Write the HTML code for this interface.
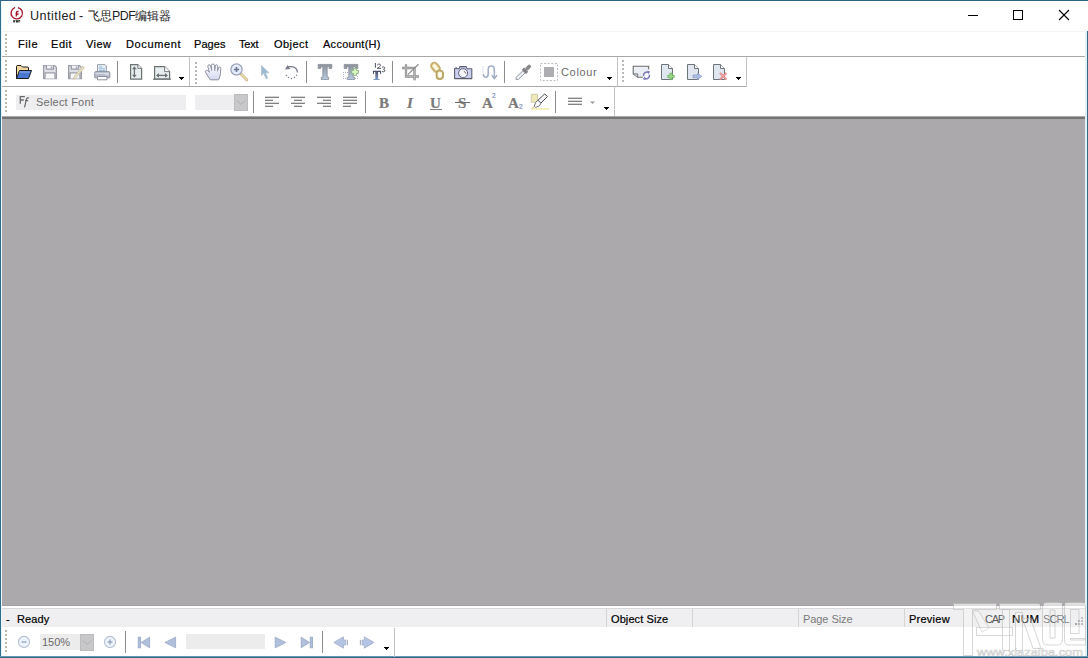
<!DOCTYPE html>
<html><head><meta charset="utf-8">
<style>
*{margin:0;padding:0;box-sizing:border-box}
html,body{width:1088px;height:658px;overflow:hidden;background:#fff;font-family:"Liberation Sans",sans-serif;font-size:11px;color:#000}
.a{position:absolute}
svg{position:absolute;overflow:visible}
.t{position:absolute;white-space:nowrap;line-height:14px;-webkit-text-stroke:0.2px currentColor}
#win{position:absolute;left:0;top:0;width:1088px;height:658px;background:#fff}
.grip{position:absolute;width:2px;background-image:linear-gradient(#b8b8b8 50%,transparent 50%);background-size:2px 4px}
.vs{position:absolute;width:1px;background:#8c8c8c}
.gb{position:absolute;width:1px;background:#c4c4c4}
.hline{position:absolute;height:1px;background:#c0c0c0}
.dd{position:absolute;width:0;height:0;border-left:3px solid transparent;border-right:3px solid transparent;border-top:3px solid #000}
</style></head><body>
<div id="win">
  <!-- borders -->
  <div class="a" style="left:0;top:0;width:1088px;height:1px;background:#2c6282"></div>
  <div class="a" style="left:0;top:0;width:1px;height:658px;background:#326c8c"></div>
  <div class="a" style="left:1px;top:1px;width:1px;height:655px;background:#e6f8fc"></div>
  <div class="a" style="left:1085px;top:31px;width:2px;height:627px;background:#e4f2f8"></div>
  <div class="a" style="left:1087px;top:31px;width:1px;height:627px;background:#326c8c"></div>
  <div class="a" style="left:0;top:656px;width:1088px;height:1px;background:#6a98b4"></div>
  <div class="a" style="left:0;top:657px;width:1088px;height:1px;background:#2c6484"></div>

  <!-- title bar -->
  <svg style="left:4px;top:2px" width="24" height="24" viewBox="0 0 24 24">
    <path d="M10.6 5.9 A5.7 5.7 0 1 0 13.9 5.6" fill="none" stroke="#a8182a" stroke-width="1.35"/>
    <path d="M10.9 5.8 L10.2 5" stroke="#a8182a" stroke-width="1.1"/>
    <path d="M12.4 14.6 V10.6 Q12.5 9.3 14.6 9.5 M12.4 11.9 H14.6" fill="none" stroke="#a8182a" stroke-width="1.5"/>
    <g fill="#2a2a2a"><rect x="9.2" y="18.2" width="1.6" height="2.3"/><rect x="10.6" y="18.2" width="0.9" height="1.2"/><rect x="12" y="18.2" width="1.9" height="2.3"/><rect x="14.4" y="18.2" width="1.8" height="1"/><rect x="14.4" y="18.2" width="1" height="2.3"/></g>
  </svg>
  <div class="t" style="left:30px;top:9px;font-size:12.6px;color:#222;-webkit-text-stroke:0;letter-spacing:0.45px">Untitled</div>
  <div class="t" style="left:79px;top:9px;font-size:12.6px;color:#222;-webkit-text-stroke:0">-</div>
  <div class="t" style="left:88px;top:9px;font-size:11.8px;color:#222;-webkit-text-stroke:0">飞思</div>
  <div class="t" style="left:112px;top:9px;font-size:12.4px;color:#222;-webkit-text-stroke:0;letter-spacing:-0.5px">PDF</div>
  <div class="t" style="left:135px;top:9px;font-size:11.6px;color:#222;-webkit-text-stroke:0">编辑器</div>
  <div class="a" style="left:968px;top:15px;width:10px;height:1px;background:#000"></div>
  <div class="a" style="left:1013px;top:10px;width:10px;height:10px;border:1px solid #000"></div>
  <svg style="left:1059px;top:10px" width="10" height="10" viewBox="0 0 10 10"><path d="M0 0 L10 10 M10 0 L0 10" stroke="#000" stroke-width="1.1"/></svg>

  <!-- menu bar -->
  <div class="hline" style="left:1px;top:31px;width:1085px;background:#f4f4f4"></div>
  <div class="hline" style="left:2px;top:56px;width:1083px;background:#a8a8a8"></div>
  <div class="grip" style="left:5px;top:34px;height:21px"></div>
  <div class="t" style="left:18px;top:37px;letter-spacing:0.6px">File</div>
  <div class="t" style="left:51px;top:37px;letter-spacing:0.57px">Edit</div>
  <div class="t" style="left:86px;top:37px;letter-spacing:0.47px">View</div>
  <div class="t" style="left:126px;top:37px;letter-spacing:0.64px">Document</div>
  <div class="t" style="left:194px;top:37px;letter-spacing:0.08px">Pages</div>
  <div class="t" style="left:239px;top:37px;letter-spacing:-0.17px">Text</div>
  <div class="t" style="left:274px;top:37px;letter-spacing:0.44px">Object</div>
  <div class="t" style="left:323px;top:37px;letter-spacing:0.27px">Account(H)</div>

  <!-- TOOLBAR 1 -->
  <div class="hline" style="left:2px;top:86px;width:745px;background:#a8a8a8"></div>
  <div class="grip" style="left:5px;top:60px;height:24px"></div>
    <!-- group 1: file -->
  <!-- open folder -->
  <svg style="left:16px;top:64px" width="16" height="16" viewBox="0 0 16 16">
    <path d="M0.5 14.5 V2.5 Q0.5 1.5 1.5 1.5 H5 L6.5 3 H11.5 Q12.5 3 12.5 4 V6.5" fill="#f0d8a0" stroke="#1a1a1a" stroke-width="1"/>
    <path d="M0.5 14.5 L3.5 6.5 H15.5 L12.5 14.5 Z" fill="#4a78d0" stroke="#1a1a1a" stroke-width="1" stroke-linejoin="round"/>
    <path d="M3.2 8 H14" stroke="#8fb0ec" stroke-width="1"/>
  </svg>
  <!-- save (disabled) -->
  <svg style="left:40px;top:60px" width="72" height="24" viewBox="0 0 72 24">
    <g stroke="#9a9ca6" stroke-width="1.3" stroke-linejoin="round">
      <path d="M3.6 5.6 H14.6 L16.4 7.4 V18.6 H3.6 Z" fill="#dfe0e8"/>
      <path d="M6.4 5.6 V9.2 H13.4 V5.6" fill="#f4f4f8"/>
      <path d="M5 18.6 V12.8 H15 V18.6" fill="#f8f8fa"/>
    </g>
    <path d="M11.4 6.4 V8.4" stroke="#9a9ca6" stroke-width="1.2"/>
    <g stroke="#9a9ca6" stroke-width="1.3" stroke-linejoin="round">
      <path d="M28.6 5.6 H39.6 L41.4 7.4 V18.6 H28.6 Z" fill="#dfe0e8"/>
      <path d="M31.4 5.6 V9.2 H38.4 V5.6" fill="#f4f4f8"/>
      <path d="M30 18.6 V12.8 H40 V18.6" fill="#f8f8fa"/>
    </g>
    <path d="M36.4 6.4 V8.4" stroke="#9a9ca6" stroke-width="1.2"/>
    <path d="M33.5 17.5 L42 7 Q42.8 6 43.6 6.8 Q44.4 7.6 43.6 8.6 L35.2 18.6 L33 19.2 Z" fill="#ece4c4" stroke="#c4bca4" stroke-width="0.8"/>
    <!-- printer -->
    <path d="M57.5 4.6 H65 L66.4 6 V12 H57.5 Z" fill="#e4eef6" stroke="#9a9ea8" stroke-width="1"/>
    <path d="M59 7 H62 M59 8.8 H65 M59 10.6 H65" stroke="#8cb0cc" stroke-width="0.9"/>
    <path d="M54.8 12.6 Q54.8 11.6 55.8 11.6 H68.8 Q69.8 11.6 69.8 12.6 V17.8 H54.8 Z" fill="#b8bccc" stroke="#8e92a0" stroke-width="1"/>
    <path d="M55.5 13.4 H69" stroke="#d8dce8" stroke-width="1.2"/>
    <circle cx="66" cy="14.6" r="0.6" fill="#fff"/><circle cx="68" cy="14.6" r="0.6" fill="#fff"/>
    <path d="M57.5 16.5 H67 V19.8 H57.5 Z" fill="#fff" stroke="#8e92a0" stroke-width="1"/>
  </svg>
  <div class="vs" style="left:117px;top:61px;height:22px"></div>
  <!-- fit height -->
  <svg style="left:126px;top:60px" width="48" height="24" viewBox="0 0 48 24">
    <g stroke="#6c7272" stroke-width="1.2" stroke-linejoin="miter">
      <path d="M4.6 4.6 H11.8 L15.6 8.4 V19.2 H4.6 Z" fill="#e6eef0"/>
      <path d="M11.8 4.6 V8.4 H15.6" fill="#f4f6f8" stroke-width="0.9"/>
      <path d="M28.6 6.6 H38.6 L43.6 11.6 V19 H28.6 Z" fill="#e6eef0"/>
      <path d="M38.6 6.6 V11.6 H43.6" fill="#f4f6f8" stroke-width="0.9"/>
      <path d="M27 19.2 H45" />
    </g>
    <path d="M8.4 7.5 V16.5" stroke="#6c7272" stroke-width="1.3"/>
    <path d="M6.1 9.3 L8.4 6.2 L10.7 9.3 Z M6.1 14.7 L8.4 17.8 L10.7 14.7 Z" fill="#6c7272"/>
    <path d="M31.5 15.4 H40.5" stroke="#6c7272" stroke-width="1.3"/>
    <path d="M33 13.1 L30 15.4 L33 17.7 Z M39 13.1 L42 15.4 L39 17.7 Z" fill="#6c7272"/>
  </svg>
  <svg style="left:179px;top:77px" width="5" height="3" viewBox="0 0 5 3" shape-rendering="crispEdges"><path d="M0 0H5V1H4V2H3V3H2V2H1V1H0Z" fill="#000"/></svg>
  <div class="gb" style="left:189px;top:57px;height:29px"></div>

  <!-- group 2: tools -->
  <div class="grip" style="left:195px;top:62px;height:22px"></div>
  <!-- hand -->
  <svg style="left:200px;top:60px" width="24" height="24" viewBox="0 0 24 24">
    <defs><linearGradient id="hg" x1="0" y1="0" x2="0" y2="1"><stop offset="0" stop-color="#ffffff"/><stop offset="1" stop-color="#d4d8f0"/></linearGradient></defs>
    <path d="M10.2 19.8 L5.6 12.6 Q4.9 11 6.3 10.3 Q7.3 9.9 8.3 11.2 L9.3 12.3 L7.9 6.6 Q7.6 5 8.9 4.8 Q10.2 4.6 10.6 6 L11.6 9.6 L11.4 5.3 Q11.4 4 12.9 4 Q14.4 4 14.5 5.3 L14.8 9.6 L15.3 5.8 Q15.5 4.7 16.6 4.8 Q17.9 5 17.8 6.2 L17.6 10.4 L18.5 7.9 Q18.9 6.9 19.9 7.1 Q20.9 7.4 20.8 8.6 L20.5 13.2 Q20.2 16.5 18.6 19.8 Z" fill="url(#hg)" stroke="#8c8e9c" stroke-width="1" stroke-linejoin="round"/>
    <path d="M11.6 9.6 L11.8 11 M14.8 9.6 V11 M17.6 10.4 L17.4 11.5" stroke="#8c8e9c" stroke-width="0.8"/>
  </svg>
  <!-- zoom in -->
  <svg style="left:230px;top:63px" width="18" height="18" viewBox="0 0 18 18">
    <path d="M10.5 10.5 L16.8 16.8" stroke="#c8b888" stroke-width="3" stroke-linecap="round"/>
    <path d="M10.5 10.5 L16.8 16.8" stroke="#f0e0b0" stroke-width="1.3" stroke-linecap="round"/>
    <circle cx="6.5" cy="6.5" r="5.6" fill="#e4ecfa" stroke="#9ca2b8" stroke-width="1.3"/>
    <path d="M6.5 3.9 V9.1 M3.9 6.5 H9.1" stroke="#6a7690" stroke-width="1.6"/>
  </svg>
  <!-- pointer -->
  <svg style="left:261px;top:65px" width="9" height="15" viewBox="0 0 9 15">
    <path d="M0.5 0.5 V10.5 L2.8 8.3 L5 13.8 L6.6 13 L4.5 7.8 H8 Z" fill="#a0bcd2" stroke="#a8c0d4" stroke-width="0.7" stroke-linejoin="round"/>
  </svg>
  <!-- rotate -->
  <svg style="left:280px;top:60px" width="24" height="24" viewBox="0 0 24 24">
    <path d="M8.2 6.6 H11.4 A5.8 5.8 0 0 1 17.4 12.6" fill="none" stroke="#7c7e8c" stroke-width="1.3"/>
    <path d="M5 9.6 L7.5 5 L10.4 8.9 Z" fill="#7c7e8c"/>
    <g fill="#7c7e8c"><circle cx="6.5" cy="15.4" r="0.75"/><circle cx="8.5" cy="17.4" r="0.75"/><circle cx="11.5" cy="18.4" r="0.75"/><circle cx="14.5" cy="17.4" r="0.75"/><circle cx="16.6" cy="15.3" r="0.75"/></g>
  </svg>
  <div class="vs" style="left:306px;top:61px;height:22px"></div>
  <!-- T -->
  <svg style="left:314px;top:60px" width="48" height="24" viewBox="0 0 48 24">
    <defs><linearGradient id="tg" x1="0" y1="0" x2="0" y2="1"><stop offset="0" stop-color="#8c9098"/><stop offset="1" stop-color="#b4cce2"/></linearGradient></defs>
    <path d="M4.2 4.4 H17.8 V8.5 H15.2 V6.8 H13.2 V17.3 H14.7 V19.5 H7.2 V17.3 H8.8 V6.8 H6.8 V8.5 H4.2 Z" fill="url(#tg)" stroke="#80848e" stroke-width="0.7"/>
    <path d="M30.2 4.4 H43.8 V8.5 H41.2 V6.8 H39.2 V17.3 H40.7 V19.5 H33.2 V17.3 H34.8 V6.8 H32.8 V8.5 H30.2 Z" fill="url(#tg)" stroke="#80848e" stroke-width="0.7"/>
    <g fill="#b0b4c8"><rect x="29" y="12" width="1" height="1"/><rect x="31" y="12" width="1" height="1"/><rect x="33" y="12" width="1" height="1"/><rect x="29" y="14" width="1" height="1"/><rect x="29" y="16" width="1" height="1"/><rect x="29" y="18" width="1" height="1"/><rect x="31" y="18" width="1" height="1"/><rect x="43" y="16" width="1" height="1"/><rect x="43" y="18" width="1" height="1"/><rect x="41" y="18" width="1" height="1"/></g>
    <path d="M39.5 8.6 H42.5 V10.4 H44.4 V13.4 H42.5 V15.4 H39.5 V13.4 H37.6 V10.4 H39.5 Z" fill="#d8f4c4" stroke="#8cb07c" stroke-width="0.9" stroke-linejoin="round"/>
  </svg>
  <!-- T 123 -->
  <svg style="left:366px;top:60px" width="24" height="24" viewBox="0 0 24 24">
    <defs><linearGradient id="tg2" x1="0" y1="0" x2="0" y2="1"><stop offset="0" stop-color="#4a4e60"/><stop offset="1" stop-color="#7e9cc8"/></linearGradient></defs>
    <path d="M6.9 10.8 H15.1 V13.9 H14 V12 H12.1 V19 H13.6 V20 H7.5 V19 H9.3 V12 H8 V13.9 H6.9 Z" fill="url(#tg2)"/>
    <path d="M9.4 3 V7.8" stroke="#5c5e68" stroke-width="1.1"/>
    <path d="M11.2 5 Q12.6 3.5 14.1 4.3 Q15.1 5.5 13.6 6.8 L11.2 8.4 H15.1" fill="none" stroke="#5c5e68" stroke-width="1"/>
    <path d="M16 7.4 Q17.6 6.4 18.7 7.4 Q19.1 8.7 17.4 9.3 Q19.3 9.7 18.9 11.1 Q17.9 12.2 16 11.5" fill="none" stroke="#5c5e68" stroke-width="1"/>
  </svg>
  <div class="vs" style="left:392px;top:61px;height:22px"></div>
  <!-- crop -->
  <svg style="left:400px;top:60px" width="48" height="24" viewBox="0 0 48 24">
    <path d="M6 4.2 V16.5 H19" fill="none" stroke="#8e8e90" stroke-width="2.3"/>
    <path d="M2 8 H14.5 V20.3" fill="none" stroke="#8e8e90" stroke-width="2.4"/>
    <path d="M6 4.5 V16.5 H18.6 M2.3 8 H14.5 V20" fill="none" stroke="#c4c4c6" stroke-width="0.7"/>
    <path d="M7.8 14.6 L18.5 4.2" stroke="#8e8e90" stroke-width="1.2"/>
    <!-- link -->
    <g transform="rotate(-40 35.5 7.3)"><rect x="32.3" y="2.3" width="6.4" height="10" rx="3.2" fill="#f4ecc0" stroke="#c8b070" stroke-width="2"/><rect x="34.8" y="4.6" width="1.4" height="5.4" rx="0.7" fill="#fff"/></g>
    <rect x="36.6" y="10.6" width="6.4" height="8.4" rx="3" fill="#f8f4e0" stroke="#bca466" stroke-width="1.9"/>
    <rect x="38.9" y="12.6" width="1.8" height="4.6" rx="0.9" fill="#fff"/>
  </svg>
  <!-- camera -->
  <svg style="left:450px;top:60px" width="52" height="24" viewBox="0 0 52 24">
    <path d="M4.6 18.6 V8.8 L6.3 7.8 L7.2 8.8 H9 L10 6.6 H16 L17.2 8.8 H21.8 V18.6 Z" fill="#ccd0f0" stroke="#5c5e70" stroke-width="1.1" stroke-linejoin="round"/>
    <circle cx="13.1" cy="13.2" r="4.5" fill="#f6f6fc" stroke="#5c5e70" stroke-width="1"/>
    <path d="M13.8 11.2 Q15.4 11.8 15.8 13.6" fill="none" stroke="#5c5e70" stroke-width="0.9"/>
    <path d="M10.4 14.6 L11.4 15.6" stroke="#9a9cb0" stroke-width="0.7"/>
    <!-- wave -->
    <path d="M33 6.5 V12.5" stroke="#c0c8dc" stroke-width="1.1" stroke-dasharray="1.2 1.2"/>
    <path d="M33.2 14 Q33.8 17.2 35.8 17.2 Q38.2 17.2 38.2 13.5 V9.5 Q38.2 6 41.2 6 Q44.3 6 44.3 9.5 V17.8" fill="none" stroke="#a4b0c8" stroke-width="1.6"/>
    <path d="M41.8 15.2 L44.4 18.6 L47 15.2" fill="none" stroke="#98a4bc" stroke-width="1.3"/>
  </svg>
  <div class="vs" style="left:504px;top:61px;height:22px"></div>
  <!-- eyedropper -->
  <svg style="left:510px;top:60px" width="24" height="24" viewBox="0 0 24 24">
    <g transform="translate(13.4 12.35) rotate(-45)">
      <path d="M-10.2 0 L-8.8 -1.5 H0.9 V1.5 H-8.8 Z" fill="#eef0f8" stroke="#8c8e96" stroke-width="0.9"/>
      <rect x="0.8" y="-3" width="3" height="6" fill="#808084"/>
      <rect x="3.6" y="-1.8" width="6.4" height="3.6" rx="1.5" fill="#8a8a8e"/>
    </g>
  </svg>
  <svg style="left:540px;top:63px" width="18" height="18" viewBox="0 0 18 18"><rect x="0.5" y="0.5" width="17" height="17" fill="none" stroke="#bcbcc6" stroke-width="1" stroke-dasharray="2 1.6"/></svg>
  <div class="a" style="left:544px;top:67px;width:10px;height:10px;background:#aeaeb2"></div>
  <div class="t" style="-webkit-text-stroke:0;left:561px;top:65px;color:#6d6d6d;letter-spacing:0.66px">Colour</div>
  <svg style="left:607px;top:77px" width="5" height="3" viewBox="0 0 5 3" shape-rendering="crispEdges"><path d="M0 0H5V1H4V2H3V3H2V2H1V1H0Z" fill="#000"/></svg>
  <div class="gb" style="left:617px;top:57px;height:30px"></div>

  <!-- group 3: pages -->
  <div class="gb" style="left:746px;top:57px;height:30px"></div>
  <div class="grip" style="left:622px;top:60px;height:24px"></div>
  <!-- page rotate -->
  <svg style="left:630px;top:60px" width="24" height="24" viewBox="0 0 24 24">
    <path d="M3.2 6.3 H18.7 V11 L13 17.2 H7.7 L3.2 13.9 Z" fill="#eceef6"/>
    <path d="M12.8 17.2 H7.7 L3.2 13.9 V6.3 H18.7 V9.5" fill="none" stroke="#6c6c6c" stroke-width="1.1"/>
    <path d="M3.2 13.9 H7.7 V17.2" fill="#c8ccd8" stroke="#6c6c6c" stroke-width="0.9"/>
    <path d="M13.6 16 A3.3 3.3 0 0 1 18.6 12.6" fill="none" stroke="#7a78b8" stroke-width="1.5"/>
    <path d="M19.4 14.6 A3.3 3.3 0 0 1 14.4 18.2" fill="none" stroke="#7a78b8" stroke-width="1.5"/>
    <path d="M17.2 10.8 L20.2 11.6 L18.4 14.2 Z M15.8 20 L12.8 19.2 L14.6 16.6 Z" fill="#7a78b8"/>
  </svg>
  <!-- page add -->
  <svg style="left:661px;top:64px" width="15" height="16" viewBox="0 0 15 16">
    <path d="M0.5 0.5 H7.5 L11.5 4.5 V15.5 H0.5 Z" fill="#dfe6f0" stroke="#6c7478" stroke-width="1"/>
    <path d="M7.5 0.5 V4.5 H11.5" fill="#fff" stroke="#6c7478" stroke-width="1"/>
    <path d="M6.8 11.3 H8.9 V9.2 H11.1 V11.3 H13.2 V13.5 H11.1 V15.6 H8.9 V13.5 H6.8 Z" fill="#9ad88a" stroke="#70b060" stroke-width="0.8"/>
  </svg>
  <!-- page export -->
  <svg style="left:687px;top:64px" width="16" height="16" viewBox="0 0 16 16">
    <path d="M0.5 0.5 H7.5 L11.5 4.5 V15.5 H0.5 Z" fill="#dfe6f0" stroke="#6c7478" stroke-width="1"/>
    <path d="M7.5 0.5 V4.5 H11.5" fill="#fff" stroke="#6c7478" stroke-width="1"/>
    <path d="M6 11 H10.6 V9.3 L14.8 12.4 L10.6 15.5 V13.8 H6 Z" fill="#b0c0e4" stroke="#8a9cc8" stroke-width="0.8"/>
  </svg>
  <!-- page delete -->
  <svg style="left:713px;top:64px" width="15" height="16" viewBox="0 0 15 16">
    <path d="M0.5 0.5 H7.5 L11.5 4.5 V15.5 H0.5 Z" fill="#dfe6f0" stroke="#6c7478" stroke-width="1"/>
    <path d="M7.5 0.5 V4.5 H11.5" fill="#fff" stroke="#6c7478" stroke-width="1"/>
    <path d="M7 9 L13.5 15.5 M13.5 9 L7 15.5" stroke="#e08080" stroke-width="2"/>
    <path d="M7 9 L13.5 15.5 M13.5 9 L7 15.5" stroke="#f4c0c0" stroke-width="0.7"/>
  </svg>
  <svg style="left:736px;top:77px" width="5" height="3" viewBox="0 0 5 3" shape-rendering="crispEdges"><path d="M0 0H5V1H4V2H3V3H2V2H1V1H0Z" fill="#000"/></svg>


  <!-- TOOLBAR 2 -->
  <div class="grip" style="left:5px;top:90px;height:24px"></div>
    <!-- font combo -->
  <div class="a" style="left:16px;top:95px;width:170px;height:15px;background:#eeedf0"></div>
  <svg style="left:14px;top:92px" width="24" height="20" viewBox="0 0 24 20">
    <path d="M6.3 4.1 V11.8 M6.3 4.7 H10.9 M6.3 8 H9.8" stroke="#6a6a6a" stroke-width="1.3" fill="none"/>
    <path d="M15 6.1 Q13.4 5.2 12.5 6.9 L10.5 15.3 M11.1 8.6 H14.1" stroke="#6a6a6a" stroke-width="1.25" fill="none"/>
  </svg>
  <div class="t" style="-webkit-text-stroke:0;left:36px;top:95px;color:#6d6d6d;letter-spacing:0.22px">Select Font</div>
  <!-- size combo -->
  <div class="a" style="left:195px;top:95px;width:53px;height:15px;background:#eeedf0"></div>
  <div class="a" style="left:234px;top:94px;width:14px;height:17px;background:#c8c7ca;border:1px solid #bcbbbe"></div>
  <svg style="left:236px;top:100px" width="10" height="6" viewBox="0 0 10 6"><path d="M1 0.5 L5 4.5 L9 0.5" fill="none" stroke="#aeadb0" stroke-width="1"/></svg>
  <div class="vs" style="left:253px;top:91px;height:22px"></div>
  <!-- align icons -->
  <svg style="left:265px;top:96px" width="94" height="12" viewBox="0 0 94 12">
    <g stroke="#585858" stroke-width="1.1">
      <path d="M0 1.3 H14 M0 4.3 H8 M0 7.3 H14 M0 10.3 H8"/>
      <path d="M26 1.3 H40 M29 4.3 H37 M26 7.3 H40 M29 10.3 H37"/>
      <path d="M52 1.3 H66 M58 4.3 H66 M52 7.3 H66 M58 10.3 H66"/>
      <path d="M78 1.3 H92 M78 4.3 H92 M78 7.3 H92 M78 10.3 H86"/>
    </g>
  </svg>
  <div class="vs" style="left:365px;top:91px;height:22px"></div>
  <!-- B I U S -->
  <div class="t" style="left:379px;top:95px;font-family:'Liberation Serif',serif;font-weight:bold;font-size:15px;color:#7a7a7a;line-height:16px">B</div>
  <div class="t" style="left:407px;top:95px;font-family:'Liberation Serif',serif;font-style:italic;font-weight:bold;font-size:15px;color:#7a7a7a;line-height:16px">I</div>
  <div class="t" style="left:430px;top:95px;font-family:'Liberation Serif',serif;font-weight:bold;font-size:15px;color:#7a7a7a;line-height:16px">U</div>
  <div class="a" style="left:430px;top:109px;width:12px;height:1px;background:#7a7a7a"></div>
  <div class="t" style="left:458px;top:95px;font-family:'Liberation Serif',serif;font-weight:bold;font-size:15px;color:#7a7a7a;line-height:16px">S</div>
  <div class="a" style="left:455px;top:102px;width:15px;height:1px;background:#6a6a6a"></div>
  <!-- superscript / subscript -->
  <div class="t" style="left:482px;top:95px;font-family:'Liberation Serif',serif;font-weight:bold;font-size:15px;color:#7a7a7a;line-height:16px">A</div>
  <div class="t" style="left:492px;top:92px;font-size:6.5px;color:#8090b8;line-height:8px">2</div>
  <div class="t" style="left:508px;top:95px;font-family:'Liberation Serif',serif;font-weight:bold;font-size:15px;color:#7a7a7a;line-height:16px">A</div>
  <div class="t" style="left:519px;top:103px;font-size:6.5px;color:#8090b8;line-height:8px">2</div>
  <!-- highlighter -->
  <svg style="left:526px;top:90px" width="28" height="24" viewBox="0 0 28 24">
    <path d="M5.5 19 H23" stroke="#f4ecb8" stroke-width="1.8"/>
    <path d="M6 19.2 L8 16.5" stroke="#e8c890" stroke-width="1.2"/>
    <path d="M5.3 4.3 H11.6 V12.2 H5.3 Z" fill="#efe8b8" stroke="#c8c4a0" stroke-width="0.9"/>
    <path d="M12 10.2 L18.7 3.9 L21.4 6.6 L14.8 13.2 Z" fill="#f4f4f8" stroke="#505058" stroke-width="1" stroke-linejoin="round"/>
    <path d="M12 10.2 L14.8 13.2 L13.5 15.8 L9.5 17.5 L8.2 16.2 L9.8 12.2 Z" fill="#fafafc" stroke="#6a6a72" stroke-width="0.9" stroke-linejoin="round"/>
  </svg>
  <div class="vs" style="left:555px;top:91px;height:22px"></div>
  <!-- line spacing -->
  <svg style="left:568px;top:96px" width="30" height="10" viewBox="0 0 30 10">
    <path d="M0 2.2 H14 M0 5.2 H14 M0 8.2 H14" stroke="#5a5a5a" stroke-width="1.1"/>
    <path d="M22 5.5 H27 L24.5 8 Z" fill="#9a9a9a"/>
  </svg>
  <svg style="left:604px;top:107px" width="5" height="3" viewBox="0 0 5 3" shape-rendering="crispEdges"><path d="M0 0H5V1H4V2H3V3H2V2H1V1H0Z" fill="#000"/></svg>
  <div class="gb" style="left:614px;top:86px;height:31px"></div>


  <!-- main gray area -->
  <div class="a" style="left:2px;top:116px;width:1083px;height:1px;background:#a8a8a8"></div>
  <div class="a" style="left:2px;top:117px;width:1083px;height:2px;background:#747474"></div>
  <div class="a" style="left:2px;top:119px;width:1083px;height:487px;background:#aba9ac"></div>
  <div class="a" style="left:2px;top:605px;width:1083px;height:1px;background:#a09ea1"></div>

  <!-- status bar -->
  <div class="a" style="left:2px;top:606px;width:1083px;height:2px;background:#fff"></div>
  <div class="a" style="left:2px;top:608px;width:1083px;height:19px;background:#efeff1;border-top:1px solid #d8d8da"></div>
  <div class="t" style="left:6px;top:612px">-</div>
  <div class="t" style="left:17px;top:612px;letter-spacing:0.12px">Ready</div>
  <div class="gb" style="left:606px;top:609px;height:18px;background:#d4d4d4"></div>
  <div class="t" style="left:611px;top:612px;letter-spacing:0.09px">Object Size</div>
  <div class="gb" style="left:692px;top:609px;height:18px;background:#d4d4d4"></div>
  <div class="gb" style="left:798px;top:609px;height:18px;background:#d4d4d4"></div>
  <div class="t" style="-webkit-text-stroke:0;left:803px;top:612px;color:#7a7a7a;letter-spacing:-0.07px">Page Size</div>
  <div class="gb" style="left:904px;top:609px;height:18px;background:#d4d4d4"></div>
  <div class="t" style="left:909px;top:612px;letter-spacing:0.25px">Preview</div>
  <div class="t" style="-webkit-text-stroke:0;left:985px;top:612px;color:#5a5a5a;letter-spacing:-1.3px">CAP</div>
  <div class="t" style="left:1012px;top:612px;letter-spacing:0.5px;font-size:11.5px">NUM</div>
  <div class="t" style="-webkit-text-stroke:0;left:1043px;top:612px;color:#5a5a5a;letter-spacing:-0.9px">SCRL</div>

  <svg style="left:1074px;top:616px" width="10" height="11" viewBox="0 0 10 11"><g fill="#a8a8a8"><rect x="7" y="1" width="2" height="2"/><rect x="4" y="4" width="2" height="2"/><rect x="7" y="4" width="2" height="2"/><rect x="1" y="7" width="2" height="2"/><rect x="4" y="7" width="2" height="2"/><rect x="7" y="7" width="2" height="2"/></g></svg>
  <!-- bottom toolbar -->
  <div class="grip" style="left:5px;top:630px;height:24px"></div>
    <!-- zoom out -->
  <svg style="left:17px;top:635px" width="14" height="14" viewBox="0 0 14 14">
    <circle cx="7" cy="7" r="5.6" fill="#eef2fa" stroke="#b4c0d4" stroke-width="1.1"/>
    <path d="M4.6 7 H9.4" stroke="#9aaac4" stroke-width="1.5"/>
  </svg>
  <!-- zoom combo -->
  <div class="a" style="left:40px;top:634px;width:54px;height:16px;background:#ececec"></div>
  <div class="t" style="-webkit-text-stroke:0;left:42px;top:635px;color:#6a6a6a">150%</div>
  <div class="a" style="left:80px;top:634px;width:14px;height:17px;background:#c8c7ca;border:1px solid #bcbbbe"></div>
  <svg style="left:82px;top:640px" width="10" height="6" viewBox="0 0 10 6"><path d="M1 0.5 L5 4.5 L9 0.5" fill="none" stroke="#aeadb0" stroke-width="1"/></svg>
  <!-- zoom in -->
  <svg style="left:103px;top:635px" width="14" height="14" viewBox="0 0 14 14">
    <circle cx="7" cy="7" r="5.6" fill="#eef2fa" stroke="#b4c0d4" stroke-width="1.1"/>
    <path d="M4.6 7 H9.4 M7 4.6 V9.4" stroke="#9aaac4" stroke-width="1.5"/>
  </svg>
  <div class="vs" style="left:125px;top:631px;height:22px"></div>
  <!-- first / prev -->
  <svg style="left:137px;top:636px" width="14" height="13" viewBox="0 0 14 13">
    <rect x="1.2" y="1.2" width="2.4" height="10.6" fill="#b0c0dc" stroke="#98a8c4" stroke-width="0.8"/>
    <path d="M12.6 1.2 V11.8 L4.2 6.5 Z" fill="#b0c0dc" stroke="#98a8c4" stroke-width="0.8" stroke-linejoin="round"/>
  </svg>
  <svg style="left:164px;top:636px" width="13" height="13" viewBox="0 0 13 13">
    <path d="M11.6 1.2 V11.8 L1 6.5 Z" fill="#b0c0dc" stroke="#98a8c4" stroke-width="0.8" stroke-linejoin="round"/>
  </svg>
  <div class="a" style="left:186px;top:634px;width:79px;height:15px;background:#ececec"></div>
  <svg style="left:274px;top:636px" width="13" height="13" viewBox="0 0 13 13">
    <path d="M1.2 1.2 V11.8 L11.8 6.5 Z" fill="#b0c0dc" stroke="#98a8c4" stroke-width="0.8" stroke-linejoin="round"/>
  </svg>
  <svg style="left:300px;top:636px" width="14" height="13" viewBox="0 0 14 13">
    <path d="M1.2 1.2 V11.8 L9.6 6.5 Z" fill="#b0c0dc" stroke="#98a8c4" stroke-width="0.8" stroke-linejoin="round"/>
    <rect x="10.2" y="1.2" width="2.4" height="10.6" fill="#b0c0dc" stroke="#98a8c4" stroke-width="0.8"/>
  </svg>
  <div class="vs" style="left:322px;top:631px;height:22px"></div>
  <!-- back / forward -->
  <svg style="left:333px;top:636px" width="16" height="13" viewBox="0 0 16 13">
    <path d="M0.8 6.5 L10.5 0.8 V4 H12.8 V9 H10.5 V12.2 Z" fill="#b4c4e4" stroke="#a4b0c8" stroke-width="0.8" stroke-linejoin="round"/>
    <path d="M14.4 3.8 V9.2" stroke="#a8b0c0" stroke-width="1.1"/>
  </svg>
  <svg style="left:359px;top:636px" width="16" height="13" viewBox="0 0 16 13">
    <path d="M15 6.5 L5.3 0.8 V4 H3 V9 H5.3 V12.2 Z" fill="#b4c4e4" stroke="#a4b0c8" stroke-width="0.8" stroke-linejoin="round"/>
    <path d="M1.4 3.8 V9.2" stroke="#a8b0c0" stroke-width="1.1"/>
  </svg>
  <svg style="left:384px;top:647px" width="5" height="3" viewBox="0 0 5 3" shape-rendering="crispEdges"><path d="M0 0H5V1H4V2H3V3H2V2H1V1H0Z" fill="#000"/></svg>
  <div class="gb" style="left:394px;top:628px;height:29px"></div>


  <!-- watermark -->
  <svg style="left:0;top:0" width="1088" height="658" viewBox="0 0 1088 658">
    <g fill="#ffffff" fill-opacity="0.25" stroke="#bcbcbc" stroke-opacity="0.6" stroke-width="1" fill-rule="evenodd">
      <path d="M953.5 603.5 H996.5 V609.5 H972.5 V655.5 H963.5 V609.5 H953.5 Z"/>
      <path d="M972.5 611 H978.5 L989 628 L982 632 Z"/>
      <path d="M999.5 603.5 H1036 Q1040.5 603.5 1040.5 608 V609.5 H999.5 Z"/>
      <path d="M976.5 627.5 H1012.5 V635.5 H976.5 Z"/>
      <path d="M1002.5 609.5 H1009.5 V650.5 H1002.5 Z M1015.5 612.5 H1022.5 V650.5 H1015.5 Z"/>
      <path d="M1022.5 618.5 H1030.5 L1041 648.5 H1033 Z"/>
      <path d="M1048 602.5 H1057 Q1062.5 602.5 1062.5 608 V639.5 Q1062.5 645 1057 645 H1048 Q1042.5 645 1042.5 639.5 V608 Q1042.5 602.5 1048 602.5 Z M1050 610 H1055 V638 H1050 Z"/>
      <path d="M1069 602.5 H1080 Q1085.5 602.5 1085.5 608 V645 H1069 Q1064.5 645 1064.5 640 V608 Q1064.5 602.5 1069 602.5 Z M1070.5 609.5 H1079 V633.5 H1070.5 Z M1070.5 638.5 H1085 V640 H1070.5 Z"/>
    </g>
    <path d="M954 604 H996 V606 H954 Z M1000 604 H1040 V606 H1000 Z M1044 603 H1062 V606 H1044 Z M1065 603 H1085 V606 H1065 Z" fill="#ffffff" fill-opacity="0.5"/>
    <text x="977" y="656" font-size="11" font-family="Liberation Sans" fill="#ffffff" fill-opacity="0.6" stroke="#c0c0c0" stroke-opacity="0.75" stroke-width="0.6" textLength="106" lengthAdjust="spacingAndGlyphs">www.xiazaiba.com</text>
  </svg>
</div>
</body></html>
